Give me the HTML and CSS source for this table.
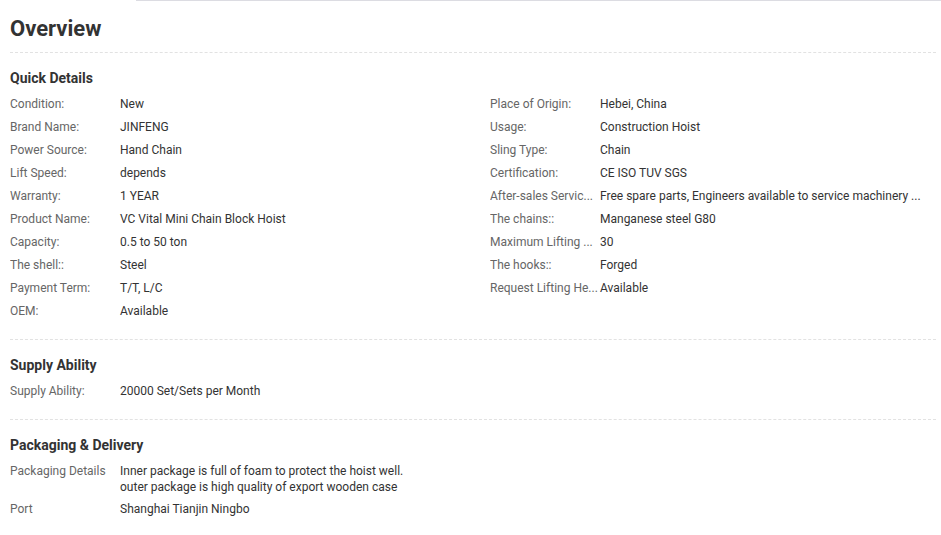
FILE: index.html
```html
<!DOCTYPE html>
<html lang="en">
  <head>
    <meta charset="UTF-8" />
    <meta name="viewport" content="width=device-width, initial-scale=1.0" />
    <title>Overview</title>
    <link rel="stylesheet" href="styles.css">
  </head>
  <body>
    <div class="top-line"></div>
    <div id="overview">
      <h1>Overview</h1>

      <div class="block">
        <h3>Quick Details</h3>
        <div class="cols">
          <div class="col">
            <div class="row"><span class="label">Condition:</span><span class="value">New</span></div>
            <div class="row"><span class="label">Brand Name:</span><span class="value">JINFENG</span></div>
            <div class="row"><span class="label">Power Source:</span><span class="value">Hand Chain</span></div>
            <div class="row"><span class="label">Lift Speed:</span><span class="value">depends</span></div>
            <div class="row"><span class="label">Warranty:</span><span class="value">1 YEAR</span></div>
            <div class="row"><span class="label">Product Name:</span><span class="value">VC Vital Mini Chain Block Hoist</span></div>
            <div class="row"><span class="label">Capacity:</span><span class="value">0.5 to 50 ton</span></div>
            <div class="row"><span class="label">The shell::</span><span class="value">Steel</span></div>
            <div class="row"><span class="label">Payment Term:</span><span class="value">T/T, L/C</span></div>
            <div class="row"><span class="label">OEM:</span><span class="value">Available</span></div>
          </div>
          <div class="col">
            <div class="row"><span class="label">Place of Origin:</span><span class="value">Hebei, China</span></div>
            <div class="row"><span class="label">Usage:</span><span class="value">Construction Hoist</span></div>
            <div class="row"><span class="label">Sling Type:</span><span class="value">Chain</span></div>
            <div class="row"><span class="label">Certification:</span><span class="value">CE ISO TUV SGS</span></div>
            <div class="row"><span class="label">After-sales Servic...</span><span class="value">Free spare parts, Engineers available to service machinery ...</span></div>
            <div class="row"><span class="label">The chains::</span><span class="value">Manganese steel G80</span></div>
            <div class="row"><span class="label">Maximum Lifting ...</span><span class="value">30</span></div>
            <div class="row"><span class="label">The hooks::</span><span class="value">Forged</span></div>
            <div class="row"><span class="label">Request Lifting He...</span><span class="value">Available</span></div>
          </div>
        </div>
      </div>

      <div class="block">
        <h3>Supply Ability</h3>
        <div class="row"><span class="label">Supply Ability:</span><span class="value">20000 Set/Sets per Month</span></div>
      </div>

      <div class="block last">
        <h3>Packaging &amp; Delivery</h3>
        <div class="row"><span class="label">Packaging Details</span><span class="value">Inner package is full of foam to protect the hoist well.<br />outer package is high quality of export wooden case</span></div>
        <div class="row"><span class="label">Port</span><span class="value">Shanghai Tianjin Ningbo</span></div>
      </div>
    </div>
  </body>
</html>
```

FILE: styles.css
```css
body {
  margin: 0;
  font-family: Roboto, "Liberation Sans", sans-serif;
  background: #fff;
  color: #333;
}
.top-line {
  margin-left: 136px;
  height: 1px;
  background: #dcdce2;
}
#overview {
  padding: 0 5px 0 10px;
}
h1 {
  margin: 0;
  padding-top: 16px;
  font-size: 22px;
  line-height: 24px;
  font-weight: 700;
  color: #333;
  padding-bottom: 11px;
  border-bottom: 1px dashed #e2e2e2;
}
.block {
  padding: 15px 0 17px;
  border-bottom: 1px dashed #e2e2e2;
}
.block.last {
  border-bottom: none;
}
h3 {
  margin: 0 0 4px;
  font-size: 14px;
  line-height: 20px;
  font-weight: 700;
  color: #333;
}
.cols {
  display: grid;
  grid-template-columns: 480px 1fr;
}
.row {
  display: flex;
  padding: 3.5px 0;
  font-size: 12px;
  line-height: 16px;
}
.block.last .row:first-of-type {
  padding-bottom: 2.5px;
}
.label {
  width: 110px;
  flex-shrink: 0;
  color: #666;
  white-space: nowrap;
  overflow: hidden;
}
.value {
  color: #333;
  white-space: nowrap;
}
```
